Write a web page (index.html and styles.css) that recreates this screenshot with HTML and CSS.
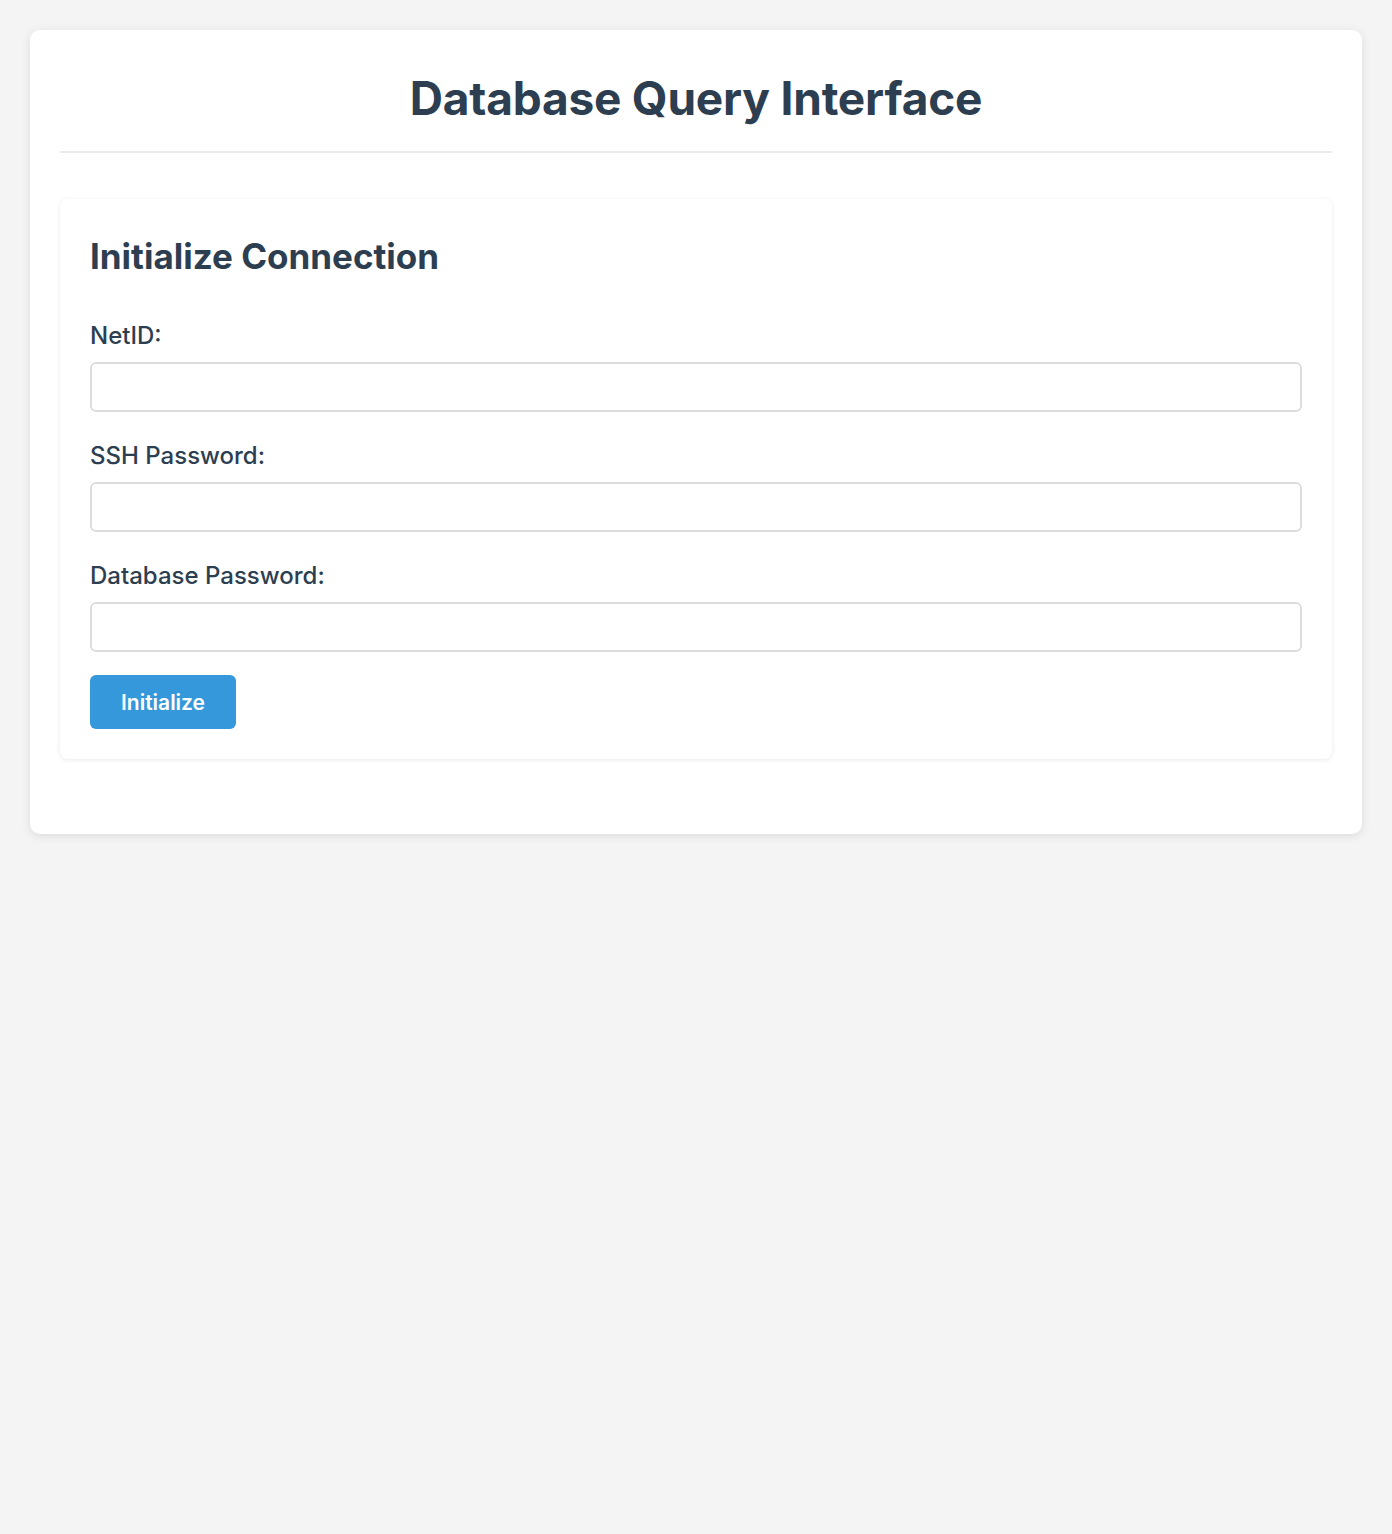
FILE: index.html
```html
<!DOCTYPE html>
<html lang="en">
<head>
<meta charset="utf-8">
<title>Database Query Interface</title>
<link rel="stylesheet" href="styles.css">
</head>
<body>
  <div class="container">
    <h1 class="title">Database Query Interface</h1>
    <section class="card">
      <h2 class="card-title">Initialize Connection</h2>
      <div class="form-group">
        <label class="label" for="netid">NetID:</label>
        <input class="input" id="netid" type="text">
      </div>
      <div class="form-group">
        <label class="label" for="ssh">SSH Password:</label>
        <input class="input" id="ssh" type="password">
      </div>
      <div class="form-group last">
        <label class="label" for="dbpw">Database Password:</label>
        <input class="input" id="dbpw" type="password">
      </div>
      <button class="btn" type="button">Initialize</button>
    </section>
  </div>
</body>
</html>
```

FILE: styles.css
```css
* { box-sizing: border-box; }

body {
  margin: 0;
  padding: 30px;
  background: #f4f4f4;
  font-family: Inter, "Noto Sans", "Liberation Sans", sans-serif;
  color: #2c3e50;
}

.container {
  background: #fff;
  border-radius: 10px;
  box-shadow: 0 2px 10px rgba(0, 0, 0, 0.1);
  padding: 30px;
}

.title {
  margin: 10px 0 46px;
  padding-bottom: 25px;
  border-bottom: 2px solid #eaeaea;
  font-size: 46px;
  line-height: 56px;
  font-weight: 700;
  text-align: center;
  letter-spacing: -0.2px;
}

.card {
  background: #fff;
  border-radius: 8px;
  box-shadow: 0 1px 5px rgba(0, 0, 0, 0.09);
  padding: 30px;
  margin-bottom: 45px;
}

.card-title {
  margin: 6px 0 44px;
  font-size: 35px;
  line-height: 42px;
  font-weight: 700;
}

.form-group {
  margin-bottom: 29px;
}
.form-group.last {
  margin-bottom: 23px;
}

.label {
  display: block;
  font-size: 24px;
  line-height: 29px;
  font-weight: 500;
  margin-bottom: 12px;
}

.input {
  display: block;
  width: 100%;
  height: 50px;
  border: 2px solid #dddddd;
  border-radius: 6px;
  background: #fff;
  font-family: inherit;
  font-size: 18px;
  padding: 0 12px;
  outline: none;
}

.btn {
  display: block;
  height: 54px;
  padding: 0 31px;
  border: none;
  border-radius: 6px;
  background: #3498db;
  color: #fff;
  font-family: inherit;
  font-size: 21px;
  font-weight: 600;
}
```
